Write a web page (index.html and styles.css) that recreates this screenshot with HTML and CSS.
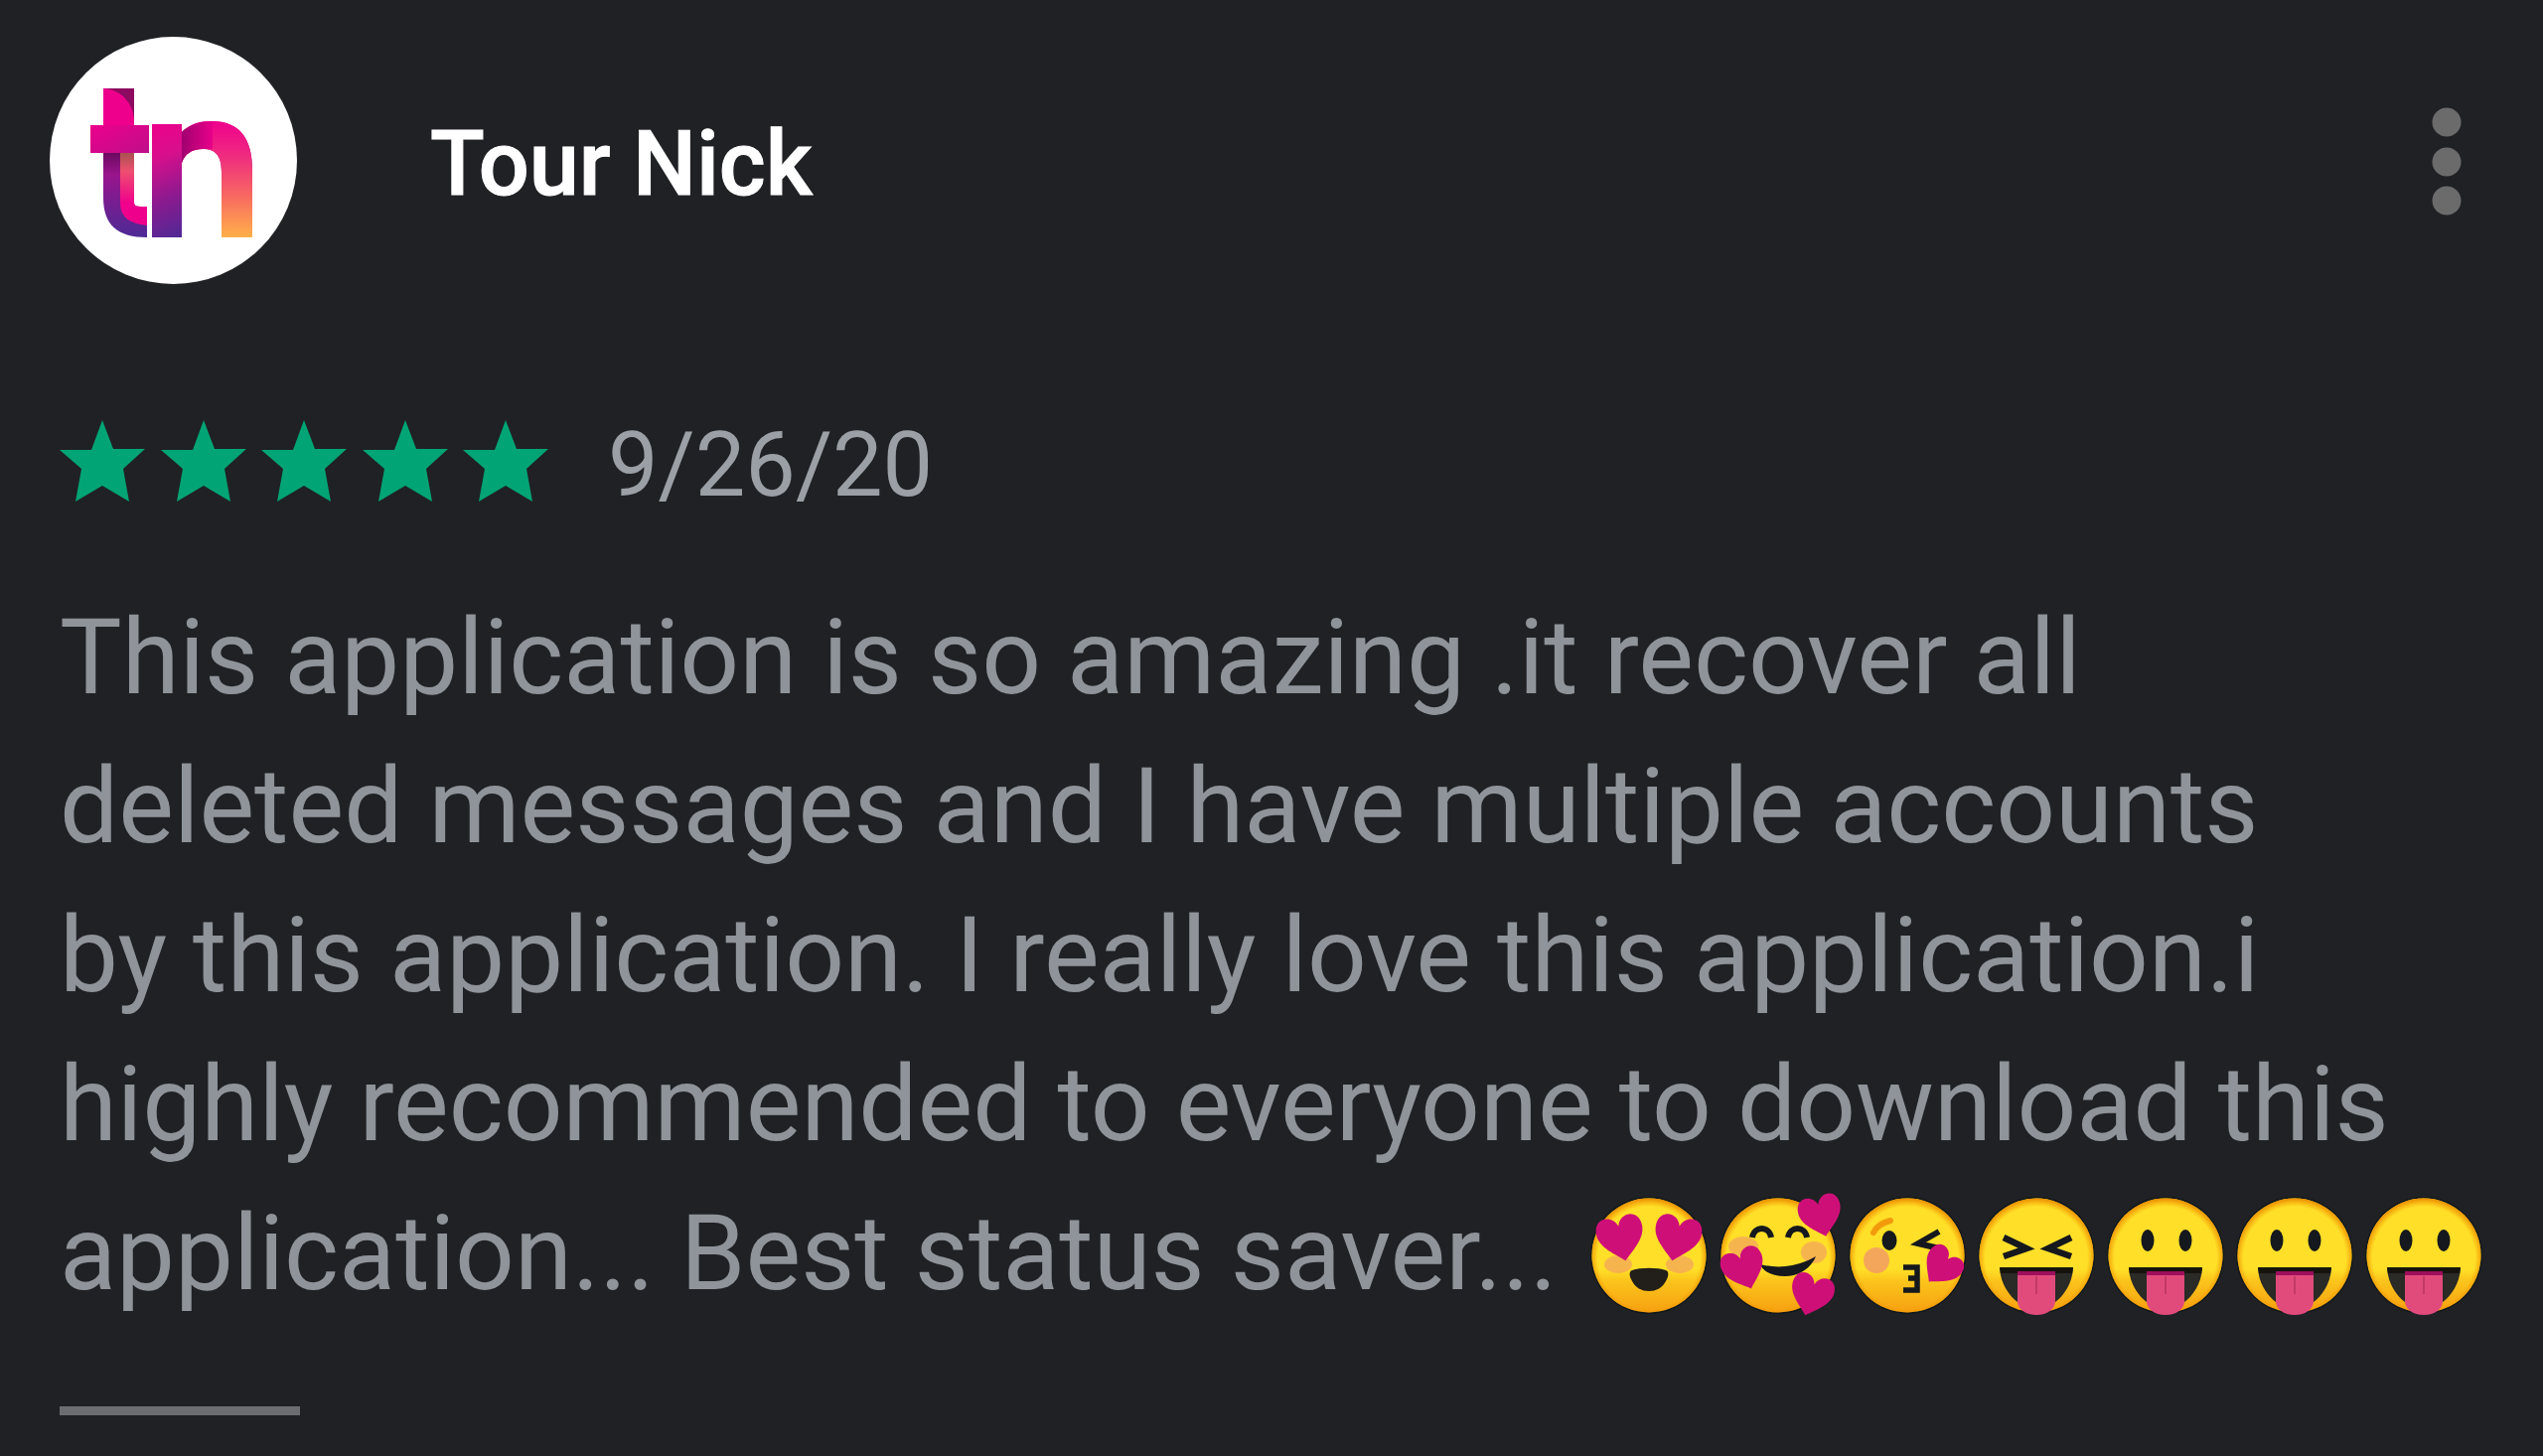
FILE: index.html
```html
<!DOCTYPE html>
<html lang="en">
<head>
<meta charset="utf-8">
<title>Review</title>
<link rel="stylesheet" href="styles.css">
</head>
<body>
<svg class="defs" width="0" height="0" aria-hidden="true">
  <defs>
    <linearGradient id="face" x1="0" y1="0" x2="0" y2="1">
      <stop offset="0" stop-color="#ffdf28"/>
      <stop offset="0.62" stop-color="#ffdf28"/>
      <stop offset="0.72" stop-color="#fbc51c"/>
      <stop offset="1" stop-color="#f6a010"/>
    </linearGradient>
    <radialGradient id="rim" cx="0.5" cy="0.52" r="0.52">
      <stop offset="0.86" stop-color="#f59a00" stop-opacity="0"/>
      <stop offset="1" stop-color="#e98a00"/>
    </radialGradient>
    <symbol id="smiley" viewBox="0 0 118 120">
      <circle cx="59" cy="59" r="59" fill="#10181c"/>
      <circle cx="59" cy="59" r="57.500" fill="url(#face)"/>
      <circle cx="59" cy="59" r="57.500" fill="url(#rim)"/>
    </symbol>
    <symbol id="tongue" viewBox="0 0 118 120">
      <use href="#smiley" width="118" height="120"/>
      <ellipse cx="41" cy="44" rx="6.500" ry="11" fill="#15181c"/>
      <ellipse cx="79" cy="44" rx="6.500" ry="11" fill="#15181c"/>
      <path d="M22 72H96C95 88 86 100 78 106H40C32 100 23 88 22 72Z" fill="#2a2a26"/>
      <path d="M22 71H96L95 77H23Z" fill="#15140c"/>
      <path d="M40 77H78V105C78 113 70 119 59 119S40 113 40 105Z" fill="#e14b7c"/>
      <path d="M40 75H78V79H40Z" fill="#9d0e5c"/>
      <path d="M59 80V98" stroke="#c23a66" stroke-width="2"/>
    </symbol>
    <path id="heart" d="M0 6C-4-8-24-8-24 10-24 24-8 34 0 42 8 34 24 24 24 10 24-8 4-8 0 6Z" fill="#cf0f78"/>
    <linearGradient id="tn-main" x1="0" y1="0" x2="0.35" y2="1">
      <stop offset="0" stop-color="#ee008c"/>
      <stop offset="0.3" stop-color="#d80f8c"/>
      <stop offset="0.65" stop-color="#8a1a8f"/>
      <stop offset="1" stop-color="#4c2a95"/>
    </linearGradient>
    <linearGradient id="tn-arch" x1="0" y1="0" x2="0" y2="1">
      <stop offset="0" stop-color="#ee008c"/>
      <stop offset="0.3" stop-color="#ef2c7f"/>
      <stop offset="0.65" stop-color="#f86a60"/>
      <stop offset="1" stop-color="#ffb04a"/>
    </linearGradient>
    <linearGradient id="tn-inner" x1="0" y1="0" x2="0" y2="1">
      <stop offset="0" stop-color="#a9524f"/>
      <stop offset="0.25" stop-color="#ee4f70"/>
      <stop offset="0.7" stop-color="#f0008c"/>
      <stop offset="1" stop-color="#ee008c"/>
    </linearGradient>
    <linearGradient id="tn-stem" x1="0" y1="0" x2="0" y2="1">
      <stop offset="0" stop-color="#6b0a60"/>
      <stop offset="0.25" stop-color="#9a148c"/>
      <stop offset="1" stop-color="#4c2a95"/>
    </linearGradient>
    <linearGradient id="tn-bar" x1="0" y1="0" x2="1" y2="1">
      <stop offset="0" stop-color="#ec008c"/>
      <stop offset="1" stop-color="#bf0f8a"/>
    </linearGradient>
    <linearGradient id="tn-shade" x1="0" y1="0" x2="1" y2="0">
      <stop offset="0" stop-color="#a00070"/>
      <stop offset="1" stop-color="#e8008a"/>
    </linearGradient>
  </defs>
</svg>

<main class="review">
  <header class="head">
    <div class="avatar">
      <svg class="logo" viewBox="0 0 164 150" width="164" height="150" aria-hidden="true">
        <path d="M13 0H44V38H13Z" fill="#8c0a5f"/>
        <path d="M13 0C30 1 44 14 44 34V38H13Z" fill="#ee008c"/>
        <path d="M13 65H44V114C44 119 46 119 57 119V150C28 150 13 138 13 110Z" fill="url(#tn-stem)"/>
        <path d="M30 65H44V114C44 119 46 119 57 119V138C40 136 30 130 30 115Z" fill="url(#tn-inner)"/>
        <path d="M0 37H59V65H0Z" fill="url(#tn-bar)"/>
        <path d="M62 36H92V44C100 36 110 33 122 33 150 33 163 50 163 82V150H132V84C132 68 126 61 113 61 102 61 95 66 92 75V150H62Z" fill="url(#tn-main)"/>
        <path d="M92 44C100 36 110 33 122 33 150 33 163 50 163 82V150H132V84C132 68 126 61 113 61 102 61 95 66 92 75Z" fill="url(#tn-arch)"/>
        <path d="M92 44C98 38 106 34 123 33V61H113C102 61 95 66 92 75Z" fill="url(#tn-shade)"/>
      </svg>
    </div>
    <h1 class="name">Tour Nick</h1>
    <svg class="more" viewBox="0 0 30 110" width="30" height="110" aria-hidden="true">
      <circle cx="15" cy="15" r="14.500" fill="#6b6b6c"/>
      <circle cx="15" cy="55" r="14.500" fill="#6b6b6c"/>
      <circle cx="15" cy="94" r="14.500" fill="#6b6b6c"/>
    </svg>
  </header>

  <div class="meta">
    <div class="stars" aria-label="5 stars">
      <svg class="star" viewBox="0 0 86 82"><path d="M43 0 54 29H86L64 49 70 82 43 66 16 82 22 49 0 30H32Z"/></svg>
      <svg class="star" viewBox="0 0 86 82"><path d="M43 0 54 29H86L64 49 70 82 43 66 16 82 22 49 0 30H32Z"/></svg>
      <svg class="star" viewBox="0 0 86 82"><path d="M43 0 54 29H86L64 49 70 82 43 66 16 82 22 49 0 30H32Z"/></svg>
      <svg class="star" viewBox="0 0 86 82"><path d="M43 0 54 29H86L64 49 70 82 43 66 16 82 22 49 0 30H32Z"/></svg>
      <svg class="star" viewBox="0 0 86 82"><path d="M43 0 54 29H86L64 49 70 82 43 66 16 82 22 49 0 30H32Z"/></svg>
    </div>
    <span class="date">9/26/20</span>
  </div>

  <p class="body">This application is so amazing .it recover all<br>deleted messages and I have multiple accounts<br>by this application. I really love this application.i<br>highly recommended to everyone to download this<br>application... Best status saver... <span class="emojis"><svg class="emoji" viewBox="0 0 118 120" aria-hidden="true">
      <use href="#smiley" width="118" height="120"/>
      <ellipse cx="28" cy="68" rx="14" ry="9" fill="#ef8f70" opacity=".55"/>
      <ellipse cx="90" cy="68" rx="14" ry="9" fill="#ef8f70" opacity=".55"/>
      <use href="#heart" transform="translate(27 24) rotate(-12) scale(.98)"/>
      <use href="#heart" transform="translate(91 24) rotate(12) scale(.98)"/>
      <path d="M42 74C50 71 68 71 76 74 79 75 79 79 77 83 73 92 66 95 59 95S45 92 41 83C39 79 39 75 42 74Z" fill="#221f1a"/>
    </svg><svg class="emoji" viewBox="0 0 118 120" aria-hidden="true">
      <use href="#smiley" width="118" height="120"/>
      <path d="M33 41C35 29 50 29 52 41M69 41C71 29 86 29 88 41" fill="none" stroke="#15181c" stroke-width="6"/>
      <ellipse cx="24" cy="50" rx="15" ry="10" fill="#ef8f70" opacity=".55"/>
      <ellipse cx="95" cy="56" rx="13" ry="11" fill="#ef8f70" opacity=".55"/>
      <path d="M41 68C60 73 80 70 97 60 92 72 80 80 66 80 54 80 44 76 41 68Z" fill="#15181c"/>
      <use href="#heart" transform="translate(98 3) rotate(-14) scale(.9)"/>
      <use href="#heart" transform="translate(19 57) rotate(-20) scale(.9)"/>
      <use href="#heart" transform="translate(97 83) rotate(16) scale(.9)"/>
    </svg><svg class="emoji" viewBox="0 0 118 120" aria-hidden="true">
      <use href="#smiley" width="118" height="120"/>
      <path d="M25 36C28 30 34 26 42 24" fill="none" stroke="#f29a0c" stroke-width="6" stroke-linecap="round"/>
      <ellipse cx="41" cy="44" rx="7.500" ry="10" fill="#15181c"/>
      <path d="M91 35 70 47 91 52" fill="none" stroke="#15181c" stroke-width="6"/>
      <circle cx="28" cy="64" r="13" fill="#ef8f70" opacity=".7"/>
      <path d="M55 71H69V82H60M69 82V94H55" fill="none" stroke="#15181c" stroke-width="5.500"/>
      <use href="#heart" transform="translate(103 59) rotate(40) scale(.82)"/>
    </svg><svg class="emoji" viewBox="0 0 118 120" aria-hidden="true">
      <use href="#smiley" width="118" height="120"/>
      <path d="M26 41 49 52 26 60M94 41 71 52 94 60" fill="none" stroke="#15181c" stroke-width="6.500"/>
      <path d="M22 72H96C95 88 86 100 78 106H40C32 100 23 88 22 72Z" fill="#2a2a26"/>
      <path d="M22 71H96L95 77H23Z" fill="#15140c"/>
      <path d="M40 77H78V105C78 113 70 119 59 119S40 113 40 105Z" fill="#e14b7c"/>
      <path d="M40 75H78V79H40Z" fill="#9d0e5c"/>
      <path d="M59 80V98" stroke="#c23a66" stroke-width="2"/>
    </svg><svg class="emoji" aria-hidden="true"><use href="#tongue"/></svg><svg class="emoji" aria-hidden="true"><use href="#tongue"/></svg><svg class="emoji" aria-hidden="true"><use href="#tongue"/></svg></span></p>

  <div class="rule"></div>
</main>
</body>
</html>
```

FILE: styles.css
```css
* { box-sizing: border-box; }

html, body {
  margin: 0;
  height: 100%;
  background: #202124;
}

.defs { position: absolute; }

.review {
  height: 1466px;
  padding: 36px 0 0 60px;
  font-family: Roboto, "Liberation Sans", sans-serif;
  overflow: hidden;
}

.head {
  display: flex;
  align-items: center;
  height: 250px;
  margin-left: -10px;
}

.avatar {
  width: 249px;
  height: 249px;
  flex: none;
  border-radius: 50%;
  background: #fff;
  display: flex;
  align-items: center;
  justify-content: center;
}

.logo { display: block; margin: 6px 3px 0 0; }

.name {
  margin: 10px 0 0 134px;
  font-size: 90px;
  font-weight: 500;
  line-height: 1;
  color: #fff;
  -webkit-text-stroke: 1px #fff;
}

.more {
  margin: 4px 82px 0 auto;
  flex: none;
}

.meta {
  display: flex;
  align-items: center;
  margin-top: 137px;
  height: 82px;
}

.stars {
  display: flex;
  gap: 15.5px;
}

.star {
  width: 86px;
  height: 82px;
  display: block;
  fill: #01a475;
}

.date {
  margin: 10px 0 0 60px;
  font-size: 90px;
  line-height: 1;
  color: #9aa0a6;
}

.body {
  margin: 83px 0 0;
  font-size: 105px;
  line-height: 150px;
  color: #8f949b;
  white-space: nowrap;
}

.emojis {
  display: inline-flex;
  gap: 12px;
  margin-left: 7px;
  vertical-align: -27px;
}

.emoji {
  display: block;
  width: 118px;
  height: 120px;
  overflow: visible;
}

.rule {
  width: 242px;
  height: 9px;
  margin-top: 78px;
  background: #6b6d71;
}
```
